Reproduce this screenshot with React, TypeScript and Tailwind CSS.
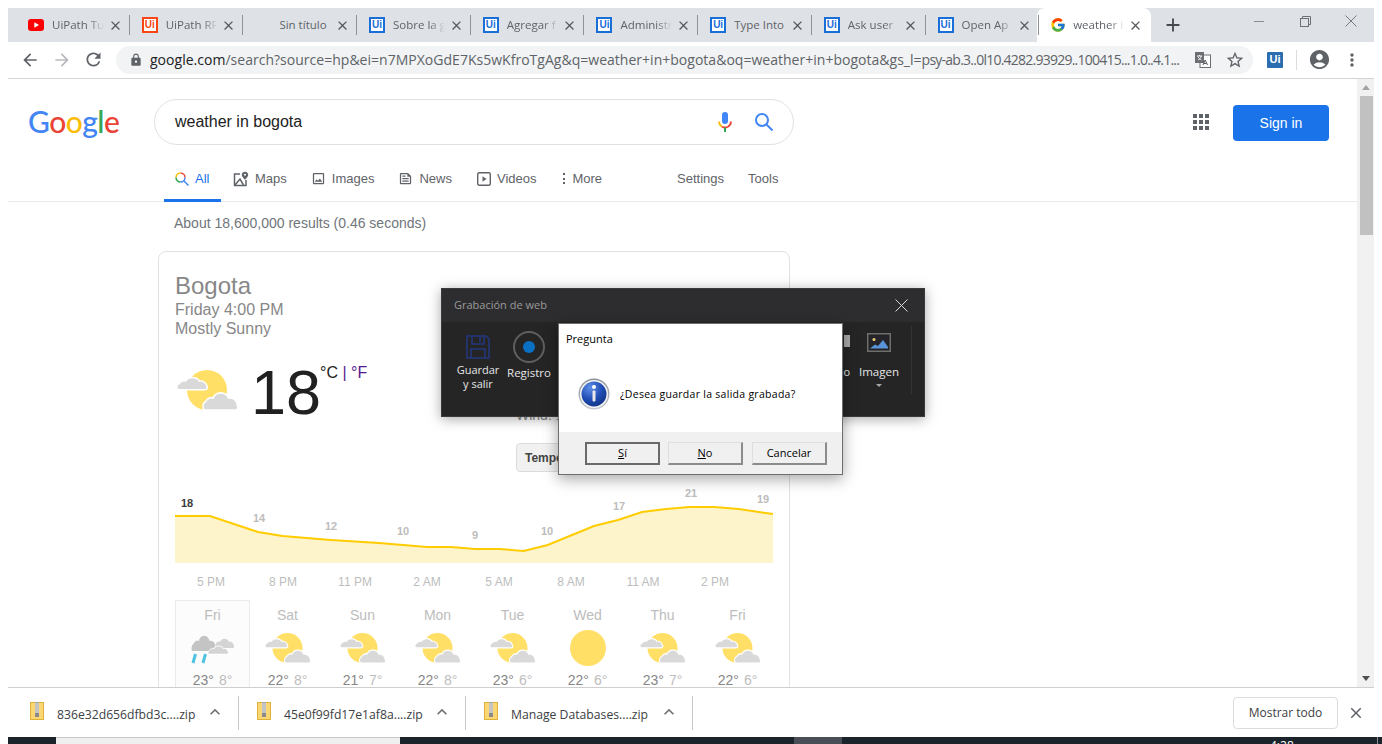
import React from "react";
import { FcGoogle } from "react-icons/fc";
import {
  MdArrowBack, MdArrowForward, MdRefresh, MdLock, MdStarBorder, MdClose, MdAdd, MdMoreVert,
  MdAccountCircle, MdExpandLess, MdApps, MdOutlinePhoto, MdOutlineFeed,
} from "react-icons/md";

const ARIAL = "font-['Liberation_Sans',Arial,sans-serif]";
const UI = "font-['Open_Sans','Noto_Sans',sans-serif]";
const FADE = "[mask-image:linear-gradient(to_right,black_70%,transparent)]";

function UiLogo({ color = "#1a6ed8" }: { color?: string }) {
  return (
    <span
      className={`flex h-4 w-4 shrink-0 items-center justify-center border-2 bg-white text-[10px] font-bold leading-none ${ARIAL}`}
      style={{ borderColor: color, color }}
    >
      Ui
    </span>
  );
}

function YouTube() {
  return (
    <svg width="16" height="12" viewBox="0 0 16 12" className="shrink-0">
      <rect width="16" height="12" rx="3" fill="#f00" />
      <path d="M6.3 3.2v5.6L11 6z" fill="#fff" />
    </svg>
  );
}

type TabInfo = { title: string; icon: React.ReactNode; full?: boolean };
const tabs: TabInfo[] = [
  { title: "UiPath Tu", icon: <YouTube /> },
  { title: "UiPath RF", icon: <UiLogo color="#fa4616" /> },
  { title: "Sin título", icon: <span className="h-4 w-4 shrink-0" />, full: true },
  { title: "Sobre la g", icon: <UiLogo /> },
  { title: "Agregar f", icon: <UiLogo /> },
  { title: "Administr", icon: <UiLogo /> },
  { title: "Type Into", icon: <UiLogo />, full: true },
  { title: "Ask user", icon: <UiLogo /> },
  { title: "Open Ap", icon: <UiLogo /> },
];

function Tab({ t }: { t: TabInfo }) {
  return (
    <div className="relative flex h-full w-[113.7px] shrink-0 items-center pl-3">
      {t.icon}
      <span className={`ml-2 w-[52px] overflow-hidden whitespace-nowrap text-[11.5px] text-[#5f6368] ${UI} ${t.full ? "" : FADE}`}>
        {t.title}
      </span>
      <MdClose className="ml-[3.5px] text-[#55585c]" size={15} />
      <span className="ml-auto h-5 w-px bg-[#8f9296]" />
    </div>
  );
}

function TabStrip() {
  return (
    <div className="flex h-[34px] items-stretch bg-[#dee1e6] pl-2">
      {tabs.map((t, i) => (
        <Tab key={i} t={t} />
      ))}
      <div className="-ml-[2px] flex h-full w-[114px] shrink-0 items-center rounded-t-lg bg-white pl-[13px]">
        <FcGoogle size={16} className="shrink-0" />
        <span className={`ml-[7px] w-[52px] overflow-hidden whitespace-nowrap text-[11.5px] text-[#5f6368] ${UI} ${FADE}`}>
          weather i
        </span>
        <MdClose className="ml-[2.5px] text-[#55585c]" size={15} />
      </div>
      <div className="ml-[11px] flex items-center">
        <MdAdd size={22} className="text-[#45484c]" />
      </div>
      <div className="ml-auto flex">
        <div className="flex w-[46px] items-center justify-center pb-2">
          <span className="h-px w-[10px] bg-[#8a8d91]" />
        </div>
        <div className="flex w-[46px] items-center justify-center pb-2">
          <svg width="11" height="11" viewBox="0 0 11 11" fill="none" stroke="#6e7175">
            <path d="M2.5 2.5V.5h8v8h-2" />
            <rect x=".5" y="2.5" width="8" height="8" />
          </svg>
        </div>
        <div className="flex w-[46px] items-center justify-center pb-2">
          <svg width="12" height="12" viewBox="0 0 12 12" stroke="#777a7e">
            <path d="M.5.5l11 11M11.5.5l-11 11" />
          </svg>
        </div>
      </div>
    </div>
  );
}

function TranslateIcon() {
  return (
    <svg width="16" height="16" viewBox="0 0 16 16">
      <rect x="5" y="3" width="10.5" height="12.5" fill="#fff" stroke="#6b6e72" />
      <rect x="0" y="0" width="9" height="11" fill="#6b6e72" />
      <path d="M2 4h5M4.5 3v1M3 8c2-1 3-2 3-4M3 4.5c.5 1.5 2 3 3.5 3.5" stroke="#fff" fill="none" strokeWidth=".9" />
      <path d="M8 13l2.2-5 2.3 5M9 11.5h2.5" stroke="#55585c" fill="none" />
    </svg>
  );
}

function Toolbar() {
  return (
    <div className="flex h-[37px] items-center border-b border-[#d4d4d4] bg-white pb-px">
      <MdArrowBack size={20} className="ml-[12px] text-[#5f6368]" />
      <MdArrowForward size={20} className="ml-[12px] text-[#b8babd]" />
      <MdRefresh size={21} className="ml-[11px] text-[#5f6368]" />
      <div className="ml-[12px] flex h-7 w-[1137px] items-center rounded-full bg-[#f1f3f4] pl-[13px]">
        <MdLock size={14} className="text-[#5f6368]" />
        <span className={`ml-[7px] w-[1032px] shrink-0 overflow-hidden whitespace-nowrap text-[14px] tracking-[0.02px] text-[#5f6368] ${UI}`}>
          <span className="text-[#202124]">google.com</span>
          /search?source=hp&amp;ei=n7MPXoGdE7Ks5wKfroTgAg&amp;q=weather+in+bogota&amp;oq=weather+in+bogota&amp;gs_l=
          <span className="tracking-[-0.76px]">psy-ab.3..0l10.4282.93929..100415...1.0..4.1...</span>
        </span>
        <span className="ml-[13px]">
          <TranslateIcon />
        </span>
        <MdStarBorder size={20} className="ml-[14px] text-[#5f6368]" />
      </div>
      <span className={`ml-[14px] flex h-4 w-4 items-center justify-center rounded-[1px] bg-[#2a6db0] text-[11px] font-bold text-white ${ARIAL}`}>Ui</span>
      <span className="ml-[13px] h-5 w-px bg-[#dcdcdc]" />
      <MdAccountCircle size={23} className="ml-[11px] text-[#5f6368]" />
      <MdMoreVert size={20} className="ml-[11px] text-[#5f6368]" />
    </div>
  );
}

function Mic() {
  return (
    <svg width="16" height="22" viewBox="0 0 16 22">
      <rect x="5" y="1" width="6" height="12" rx="3" fill="#4285f4" />
      <path d="M2 10.5a6 6 0 0 0 3 5.2" stroke="#fbbc05" strokeWidth="1.8" fill="none" />
      <path d="M14 10.5a6 6 0 0 1-3 5.2" stroke="#ea4335" strokeWidth="1.8" fill="none" />
      <path d="M5 15.7c2 1 4 1 6 0" stroke="#ea4335" strokeWidth="1.8" fill="none" />
      <rect x="7" y="16.5" width="2" height="4.5" fill="#34a853" />
    </svg>
  );
}

function SearchGlass({ size = 20 }: { size?: number }) {
  return (
    <svg width={size} height={size} viewBox="0 0 20 20" fill="none" stroke="#4285f4" strokeWidth="2">
      <circle cx="8" cy="8" r="6" />
      <path d="M12.5 12.5L18.5 18.5" />
    </svg>
  );
}

function ColorGlass() {
  return (
    <svg width="14" height="14" viewBox="0 0 14 14" fill="none" strokeWidth="1.5">
      <path d="M5.5 1a4.5 4.5 0 0 1 4.5 4.5" stroke="#ea4335" />
      <path d="M1 5.5A4.5 4.5 0 0 1 5.5 1" stroke="#fbbc05" />
      <path d="M1 5.5A4.5 4.5 0 0 0 5.5 10" stroke="#34a853" />
      <path d="M5.5 10A4.5 4.5 0 0 0 10 5.5" stroke="#4285f4" />
      <path d="M9 9l4.5 4.5" stroke="#4285f4" />
    </svg>
  );
}

function MapsIcon() {
  return (
    <svg width="16" height="16" viewBox="0 0 16 16" fill="none" stroke="#5f6368" strokeWidth="1.5">
      <path d="M7 3H1.5v11.5H13V9" />
      <path d="M2 14l5-6 3.5 6" />
      <path d="M12 .8c-2 0-3.2 1.5-3.2 3 0 2 3.2 5 3.2 5s3.2-3 3.2-5c0-1.5-1.2-3-3.2-3z" fill="#5f6368" stroke="none" />
      <circle cx="12" cy="3.8" r="1" fill="#fff" stroke="none" />
    </svg>
  );
}

function NavItem({ icon, label, ml }: { icon: React.ReactNode; label: string; ml: string }) {
  return (
    <a className={`flex h-[53px] items-center pt-[6px] text-[13px] text-[#5f6368] ${ml}`}>
      {icon}
      <span className="ml-[6px]">{label}</span>
    </a>
  );
}

function Header() {
  return (
    <div className={`h-[123px] shrink-0 border-b border-[#ebebeb] ${ARIAL}`}>
      <div className="flex h-[66px] items-start pl-5 pt-5">
        <div className="flex h-[44px] w-[126px] items-center font-['Lato',sans-serif] text-[30px] font-medium leading-none tracking-[-0.6px]">
          <span className="text-[#4285f4]">G</span>
          <span className="text-[#ea4335]">o</span>
          <span className="text-[#fbbc05]">o</span>
          <span className="text-[#4285f4]">g</span>
          <span className="text-[#34a853]">l</span>
          <span className="text-[#ea4335]">e</span>
        </div>
        <div className="flex h-[46px] w-[640px] items-center rounded-full border border-[#dfe1e5] pl-5 text-[16px] text-[#222]">
          weather in bogota
          <span className="ml-auto">
            <Mic />
          </span>
          <span className="ml-[21px] mr-[19px]">
            <SearchGlass />
          </span>
        </div>
        <MdApps size={24} className="ml-[395px] mt-[11px] text-[#5f6368]" />
        <button className="ml-[20px] mt-[6px] h-9 w-24 rounded bg-[#1a73e8] text-[14px] text-white">Sign in</button>
      </div>
      <div className="flex h-[57px] items-end pl-[156px]">
        <a className="flex h-[56px] w-[57px] items-center justify-start border-b-[3px] border-[#1a73e8] pl-[11px] pt-[12px] text-[13px] text-[#1a73e8]">
          <ColorGlass />
          <span className="ml-[6px]">All</span>
        </a>
        <NavItem ml="ml-[12px]" icon={<MapsIcon />} label="Maps" />
        <NavItem ml="ml-[24px]" icon={<MdOutlinePhoto size={15} />} label="Images" />
        <NavItem ml="ml-[24px]" icon={<MdOutlineFeed size={15} />} label="News" />
        <NavItem ml="ml-[25px]" icon={<svg width="14" height="14" viewBox="0 0 14 14" fill="none" stroke="#5f6368" strokeWidth="1.4"><rect x=".7" y=".7" width="12.6" height="12.6" rx="1.5" /><path d="M5.5 4.2v5.6L9.5 7z" fill="#5f6368" stroke="none" /></svg>} label="Videos" />
        <a className="ml-[27px] flex h-[53px] items-center pt-[6px] text-[13px] text-[#5f6368]">
          <span className="flex h-[11px] w-[2px] flex-col justify-between">
            <span className="h-[2px] w-[2px] bg-[#5f6368]" />
            <span className="h-[2px] w-[2px] bg-[#5f6368]" />
            <span className="h-[2px] w-[2px] bg-[#5f6368]" />
          </span>
          <span className="ml-[7px]">More</span>
        </a>
        <a className="ml-[75px] flex h-[53px] items-center pt-[6px] text-[13px] text-[#5f6368]">Settings</a>
        <a className="ml-[24px] flex h-[53px] items-center pt-[6px] text-[13px] text-[#5f6368]">Tools</a>
      </div>
    </div>
  );
}

const CLOUD = "M2 14C0 14 0 10 3 9C4 7 7 6 9 7C11 2 20 2 22 7C26 6 29 9 29 11C30 12 30 14 28 14Z";

function PartlyCloudy({ w, h }: { w: number; h: number }) {
  return (
    <svg width={w} height={h} viewBox="0 0 60 40" className="shrink-0">
      <circle cx="30" cy="20" r="20" fill="#ffdf66" />
      <g transform="translate(0,5)">
        <path d={CLOUD} fill="#d9d9d9" stroke="#fff" strokeWidth="3" style={{ paintOrder: "stroke" }} />
      </g>
      <g transform="translate(26,19) scale(1.15,1.45)">
        <path d={CLOUD} fill="#d9d9d9" stroke="#fff" strokeWidth="2.5" style={{ paintOrder: "stroke" }} />
      </g>
    </svg>
  );
}

function RainCloud() {
  return (
    <svg width="45" height="36" viewBox="0 0 45 36" className="shrink-0">
      <g transform="translate(24,6) scale(.68,.85)">
        <path d={CLOUD} fill="#d4d4d4" />
      </g>
      <g transform="translate(1,1) scale(.85,1.43)">
        <path d={CLOUD} fill="#c4c4c4" stroke="#fff" strokeWidth="1" style={{ paintOrder: "stroke" }} />
      </g>
      <g transform="translate(18,14) scale(.68,.7)">
        <path d={CLOUD} fill="#d4d4d4" stroke="#fff" strokeWidth="2" style={{ paintOrder: "stroke" }} />
      </g>
      <path d="M3 33l2.5-9M13 33l2.5-9" stroke="#4fc3e0" strokeWidth="3" />
    </svg>
  );
}

const pts = "0,30 35,30 83,46 107.5,50 156,54 204,57 252,61 276,61 300,63 324.5,63 348.6,65 372.7,59 419,40 443,34 467,26 491,23 515,21 539,21 563.5,23 598,28";
const chartLabels: [number, number, string][] = [
  [84, 36, "14"], [156, 44, "12"], [228, 49, "10"], [300, 53, "9"], [372, 49, "10"], [444, 24, "17"], [516, 11, "21"], [588, 17, "19"],
];

function Chart() {
  return (
    <svg width="598" height="78" viewBox="0 0 598 78" className="block">
      <polygon points={`0,77 ${pts} 598,77`} fill="#fef4cb" />
      <polyline points={pts} fill="none" stroke="#ffcc00" strokeWidth="2" />
      <text x="12" y="21" textAnchor="middle" fontSize="11" fontWeight="700" fill="#3c3c3c">18</text>
      {chartLabels.map(([x, y, t], i) => (
        <text key={i} x={x} y={y} textAnchor="middle" fontSize="11" fontWeight="700" fill="#bdbdbd">{t}</text>
      ))}
    </svg>
  );
}

const times = ["5 PM", "8 PM", "11 PM", "2 AM", "5 AM", "8 AM", "11 AM", "2 PM"];
const days: [string, string, string, "rain" | "sun" | "part"][] = [
  ["Fri", "23°", "8°", "rain"],
  ["Sat", "22°", "8°", "part"],
  ["Sun", "21°", "7°", "part"],
  ["Mon", "22°", "8°", "part"],
  ["Tue", "23°", "6°", "part"],
  ["Wed", "22°", "6°", "sun"],
  ["Thu", "23°", "7°", "part"],
  ["Fri", "22°", "6°", "part"],
];

function WeatherCard() {
  return (
    <div className={`ml-[150px] mt-[19px] w-[632px] rounded-t-lg border border-[#dfe1e5] px-4 pt-5 pb-4 ${ARIAL}`}>
      <div className="flex h-[214px]">
        <div className="w-[341px] shrink-0">
          <div className="text-[24px] leading-[28px] text-[#878787]">Bogota</div>
          <div className="text-[16px] leading-[19px] text-[#878787]">Friday 4:00 PM</div>
          <div className="text-[16px] leading-[19px] text-[#878787]">Mostly Sunny</div>
          <div className="mt-[18px] flex h-[72px] items-start">
            <span className="ml-[2px] mt-[14px]">
              <PartlyCloudy w={60} h={40} />
            </span>
            <span className="ml-[14px] text-[63px] leading-[72px] text-[#212121]">18</span>
            <span className="-ml-[1px] mt-[8px] text-[16px] leading-[18px]">
              <span className="text-[#212121]">°C</span>
              <span className="text-[#551a8b]"> | °F</span>
            </span>
          </div>
        </div>
        <div className="flex-1 pt-[134px]">
          <div className="text-[14px] leading-[19px] text-[#878787]">Wind: 11 km/h</div>
          <div className="mt-[18px] flex h-[29px] w-[120px] items-center rounded-sm border border-[#dcdcdc] bg-[#f1f1f1] pl-2 text-[12px] font-bold text-[#444]">
            Temperature
          </div>
        </div>
      </div>
      <Chart />
      <div className="mt-[8px] flex h-5">
        {times.map((t) => (
          <div key={t} className="w-[72px] text-center text-[12px] leading-5 text-[#bdbdbd]">{t}</div>
        ))}
      </div>
      <div className="mt-[8px] flex">
        {days.map(([d, hi, lo, kind], i) => (
          <div key={i} className={`flex h-[95px] w-[75px] shrink-0 flex-col items-center pt-[6px] ${i === 0 ? "border border-b-0 border-[#ebebeb] bg-[#fcfcfc]" : "border border-transparent"}`}>
            <div className="text-[14px] leading-4 text-[#bdbdbd]">{d}</div>
            <div className="flex h-[49px] w-full items-center justify-center">
              {kind === "rain" && <RainCloud />}
              {kind === "part" && <PartlyCloudy w={45} h={30} />}
              {kind === "sun" && <span className="h-9 w-9 rounded-full bg-[#ffdf66]" />}
            </div>
            <div className="text-[14px] leading-4">
              <span className="text-[#878787]">{hi}</span>
              <span className="ml-[5px] text-[#bdbdbd]">{lo}</span>
            </div>
          </div>
        ))}
      </div>
    </div>
  );
}

function Scrollbar() {
  return (
    <div className="flex w-[17px] shrink-0 flex-col items-center bg-[#f1f1f1] pl-[1px]">
      <span className="mt-[6px] h-0 w-0 border-x-[4px] border-b-[5px] border-x-transparent border-b-[#a3a3a3]" />
      <div className="mt-[6px] h-[139px] w-[13px] bg-[#c1c1c1]" />
      <span className="mb-[6px] mt-auto h-0 w-0 border-x-[4px] border-t-[5px] border-x-transparent border-t-[#505050]" />
    </div>
  );
}

function ZipIcon() {
  return (
    <svg width="14" height="18" viewBox="0 0 14 18" className="shrink-0">
      <rect x=".5" y=".5" width="13" height="17" fill="#fbd774" stroke="#e0b23c" />
      <rect x="5" y="0" width="4" height="12" fill="#a8a8a8" />
      <path d="M5 2h4M5 4h4M5 6h4M5 8h4M5 10h4" stroke="#ededed" strokeWidth=".8" />
      <rect x="5" y="11" width="4" height="4" fill="#8a8a8a" />
    </svg>
  );
}

function DownloadItem({ name }: { name: string }) {
  return (
    <div className="flex h-[34px] w-[227px] shrink-0 items-center border-r border-[#c8c8c8]">
      <span className="-mt-[3px] ml-[18px]"><ZipIcon /></span>
      <span className={`ml-[13.5px] w-[140px] whitespace-nowrap pt-[5px] text-[12.2px] text-[#3c4043] ${UI}`}>{name}</span>
      <MdExpandLess size={20} className="-mt-[2px] ml-[7.5px] text-[#6d7073]" />
    </div>
  );
}

function DownloadBar() {
  return (
    <div className="flex h-[50px] shrink-0 items-center border-t border-[#cfcfcf] bg-white pl-[3.5px]">
      <DownloadItem name="836e32d656dfbd3c....zip" />
      <DownloadItem name="45e0f99fd17e1af8a....zip" />
      <DownloadItem name="Manage Databases....zip" />
      <button className={`ml-auto flex h-8 w-[105px] items-center justify-center rounded border border-[#dadce0] text-[12px] text-[#3c4043] ${UI}`}>
        Mostrar todo
      </button>
      <MdClose size={18} className="mx-[9px] text-[#5f6368]" />
    </div>
  );
}

function Taskbar() {
  return (
    <div className="ml-2 flex h-[7px] shrink-0 overflow-hidden bg-[#1b232b]">
      <div className="ml-[48px] h-full w-[344px] border-t border-[#c8c8c8] bg-[#f0f0f0]" />
      <div className="ml-[394px] h-full w-[48px] bg-[#4a4f57]" />
      <div className={`ml-[428px] pt-[3px] text-[12px] leading-[12px] text-white ${UI}`}>4:28</div>
      <div className="ml-auto mr-[4px] h-full w-px bg-[#8a8f96]" />
    </div>
  );
}

function DarkWindow() {
  return (
    <div className={`absolute left-[441px] top-[288px] h-[129px] w-[484px] border border-[#3a3a3a] bg-[#252526] shadow-[0_2px_12px_rgba(0,0,0,0.35)] ${UI}`}>
      <div className="flex h-[33px] items-center justify-between bg-[#2d2d2f] pl-[12px] pr-[16px]">
        <span className="text-[11px] text-[#9a9a9a]">Grabación de web</span>
        <svg width="13" height="13" viewBox="0 0 13 13" stroke="#d8d8d8"><path d="M.5.5l12 12M12.5.5l-12 12" /></svg>
      </div>
      <div className="flex h-[95px] pl-[11px] pr-[12px] pt-[4px]">
        <div className="flex w-[50px] flex-col items-center text-center text-[11px] leading-[14px] text-[#e6e6e6]">
          <svg width="24" height="24" viewBox="0 0 24 24" fill="none" stroke="#23377f" strokeWidth="1.5" className="mt-[9px]">
            <path d="M1 1h19l3 3v19H1z" />
            <path d="M6 1v8h12V1M14 2v5M5 23v-9h14v9" />
          </svg>
          <span className="mt-[4px]">Guardar<br />y salir</span>
        </div>
        <div className="ml-[1px] flex w-[50px] flex-col items-center text-center text-[11.5px] leading-[14px] text-[#e6e6e6]">
          <span className="mt-[5px] flex h-8 w-8 items-center justify-center rounded-full border-2 border-[#5f5f5f]">
            <span className="h-3 w-3 rounded-full bg-[#0a70c4]" />
          </span>
          <span className="mt-[3px]">Registro</span>
        </div>
        <div className="flex flex-1 flex-col items-end text-[11px] leading-[14px] text-[#e6e6e6]">
          <span className="mt-[9px] h-3 w-[6px] bg-[#a8a8a8]" />
          <span className="mt-[18px]">Video</span>
        </div>
        <div className="ml-[4px] flex w-[50px] flex-col items-center text-center text-[11.5px] leading-[14px] text-[#e6e6e6]">
          <svg width="24" height="19" viewBox="0 0 24 19" className="mt-[7px]">
            <rect x=".75" y=".75" width="22.5" height="17.5" fill="#222" stroke="#6f6f6f" strokeWidth="1.5" />
            <rect x="3" y="3" width="18" height="13" fill="#24242a" />
            <circle cx="7" cy="6.5" r="1.5" fill="#f0d070" />
            <path d="M3 15.5l5-4 3 1.5 5-6 5 7v1.5z" fill="#5a94d8" />
          </svg>
          <span className="mt-[13px]">Imagen</span>
          <span className="mt-[5px] h-0 w-0 border-x-[3px] border-t-[3px] border-x-transparent border-t-[#a8a8a8]" />
        </div>
        <span className="ml-[7px] h-[68px] w-px bg-[#333335]" />
      </div>
    </div>
  );
}

function InfoIcon() {
  return (
    <svg width="32" height="32" viewBox="0 0 32 32">
      <defs>
        <radialGradient id="blueOrb" cx="35%" cy="25%" r="85%">
          <stop offset="0%" stopColor="#5f8fe8" />
          <stop offset="55%" stopColor="#1f4db5" />
          <stop offset="100%" stopColor="#10307f" />
        </radialGradient>
        <linearGradient id="ring" x1="0" y1="0" x2="0" y2="1">
          <stop offset="0%" stopColor="#8a8f99" />
          <stop offset="100%" stopColor="#c8ccd2" />
        </linearGradient>
      </defs>
      <circle cx="16" cy="16" r="15.5" fill="url(#ring)" />
      <circle cx="16" cy="16" r="14" fill="#f4f4f4" />
      <circle cx="16" cy="16" r="12.5" fill="url(#blueOrb)" />
      <circle cx="16" cy="9" r="2" fill="#fff" />
      <rect x="14.5" y="12.5" width="3" height="11" rx="1" fill="#e8e8e8" />
    </svg>
  );
}

function DlgButton({ children, primary, className = "" }: { children: React.ReactNode; primary?: boolean; className?: string }) {
  return (
    <button
      className={`flex h-[23px] w-[75px] items-center justify-center bg-[#f0f0f0] text-[11px] text-black ${className} ${
        primary
          ? "border-2 border-[#6a6a6a]"
          : "border-b-2 border-l border-r-2 border-t border-b-[#8c8c8c] border-l-[#dedede] border-r-[#8c8c8c] border-t-[#dedede]"
      }`}
    >
      {children}
    </button>
  );
}

function Question() {
  return (
    <div className={`absolute left-[558px] top-[323px] flex h-[152px] w-[285px] flex-col border border-[#6e6e6e] bg-white shadow-[0_4px_14px_rgba(0,0,0,0.35)] ${UI}`}>
      <div className="h-[108px] pl-[7px] pt-[7px]">
        <div className="text-[11px] leading-4 text-black">Pregunta</div>
        <div className="mt-[31px] flex items-center pl-[12px]">
          <InfoIcon />
          <span className="ml-[10px] mt-[2px] text-[10.5px] tracking-[0.28px] text-black">¿Desea guardar la salida grabada?</span>
        </div>
      </div>
      <div className="flex flex-1 justify-end bg-[#f0f0f0] pr-[15px] pt-[10px]">
        <DlgButton primary><span className="underline">S</span>í</DlgButton>
        <DlgButton className="ml-[8px]"><span className="underline">N</span>o</DlgButton>
        <DlgButton className="ml-[9px]">Cancelar</DlgButton>
      </div>
    </div>
  );
}

export default function App() {
  return (
    <div className="relative flex h-[744px] w-[1382px] flex-col overflow-hidden bg-white pt-2">
      <div className="ml-2 flex h-[729px] w-[1366px] flex-col">
        <TabStrip />
        <Toolbar />
        <div className="flex min-h-0 flex-1">
          <div className="min-w-0 flex-1 overflow-hidden">
            <Header />
            <div className={`ml-[166px] mt-[12px] text-[14px] leading-[18px] text-[#70757a] ${ARIAL}`}>
              About 18,600,000 results (0.46 seconds)
            </div>
            <WeatherCard />
          </div>
          <Scrollbar />
        </div>
        <DownloadBar />
      </div>
      <Taskbar />
      <DarkWindow />
      <Question />
    </div>
  );
}
